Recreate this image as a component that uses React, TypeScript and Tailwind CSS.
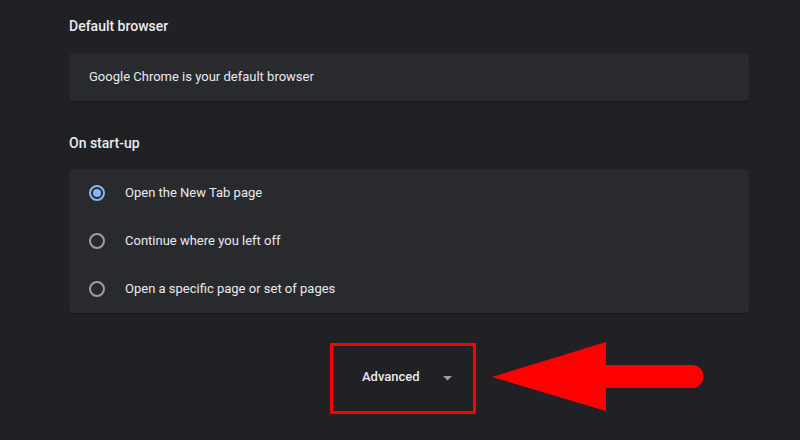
import React from "react";

function Radio({ checked }: { checked?: boolean }) {
  return (
    <div
      className={
        "w-4 h-4 rounded-full border-2 flex items-center justify-center " +
        (checked ? "border-[#8ab4f8]" : "border-[#9aa0a6]")
      }
    >
      {checked && <div className="w-2 h-2 rounded-full bg-[#8ab4f8]" />}
    </div>
  );
}

export default function App() {
  const rows = [
    { label: "Open the New Tab page", checked: true },
    { label: "Continue where you left off" },
    { label: "Open a specific page or set of pages" },
  ];
  return (
    <div
      className="relative w-[800px] h-[440px] overflow-hidden bg-[#202124] text-[#e8eaed]"
      style={{ fontFamily: "Roboto, 'Liberation Sans', sans-serif" }}
    >
      <div className="pl-[69px] pt-[16px] w-[749px]">
        <div className="h-5 leading-5 text-[14px] font-medium">Default browser</div>
        <div className="mt-[17px] h-12 rounded bg-[#292a2d] shadow-[0_1px_2px_rgba(0,0,0,0.35)] flex items-center pl-5 text-[13px]">
          Google Chrome is your default browser
        </div>
        <div className="mt-[32px] h-5 leading-5 text-[14px] font-medium">On start-up</div>
        <div className="mt-[16px] rounded bg-[#292a2d] shadow-[0_1px_2px_rgba(0,0,0,0.35)]">
          {rows.map((r) => (
            <div key={r.label} className="h-12 flex items-center pl-5 text-[13px]">
              <Radio checked={r.checked} />
              <span className="ml-5">{r.label}</span>
            </div>
          ))}
        </div>
      </div>
      <div className="mt-[30px] pl-[330px] flex">
        <div className="w-[146px] h-[71px] border-[3px] border-[#ff0000] flex items-center pl-[29px] pb-[3px]">
          <span className="text-[13px] font-medium">Advanced</span>
          <svg width="9" height="5" viewBox="0 0 9 5" className="ml-[23px] mt-[2px]">
            <path d="M0 0 L9 0 L4.5 4.5 Z" fill="#9aa0a6" />
          </svg>
        </div>
      </div>
      <svg
        className="absolute left-[488px] top-[338px]"
        width="225"
        height="78"
        viewBox="0 0 225 78"
      >
        <g transform="translate(-488,-338)">
          <path d="M492 377 L606 342 L606 365 L692 365 A11.5 11.5 0 0 1 692 388 L606 388 L606 411 Z" fill="#ff0000" />
        </g>
      </svg>
    </div>
  );
}
